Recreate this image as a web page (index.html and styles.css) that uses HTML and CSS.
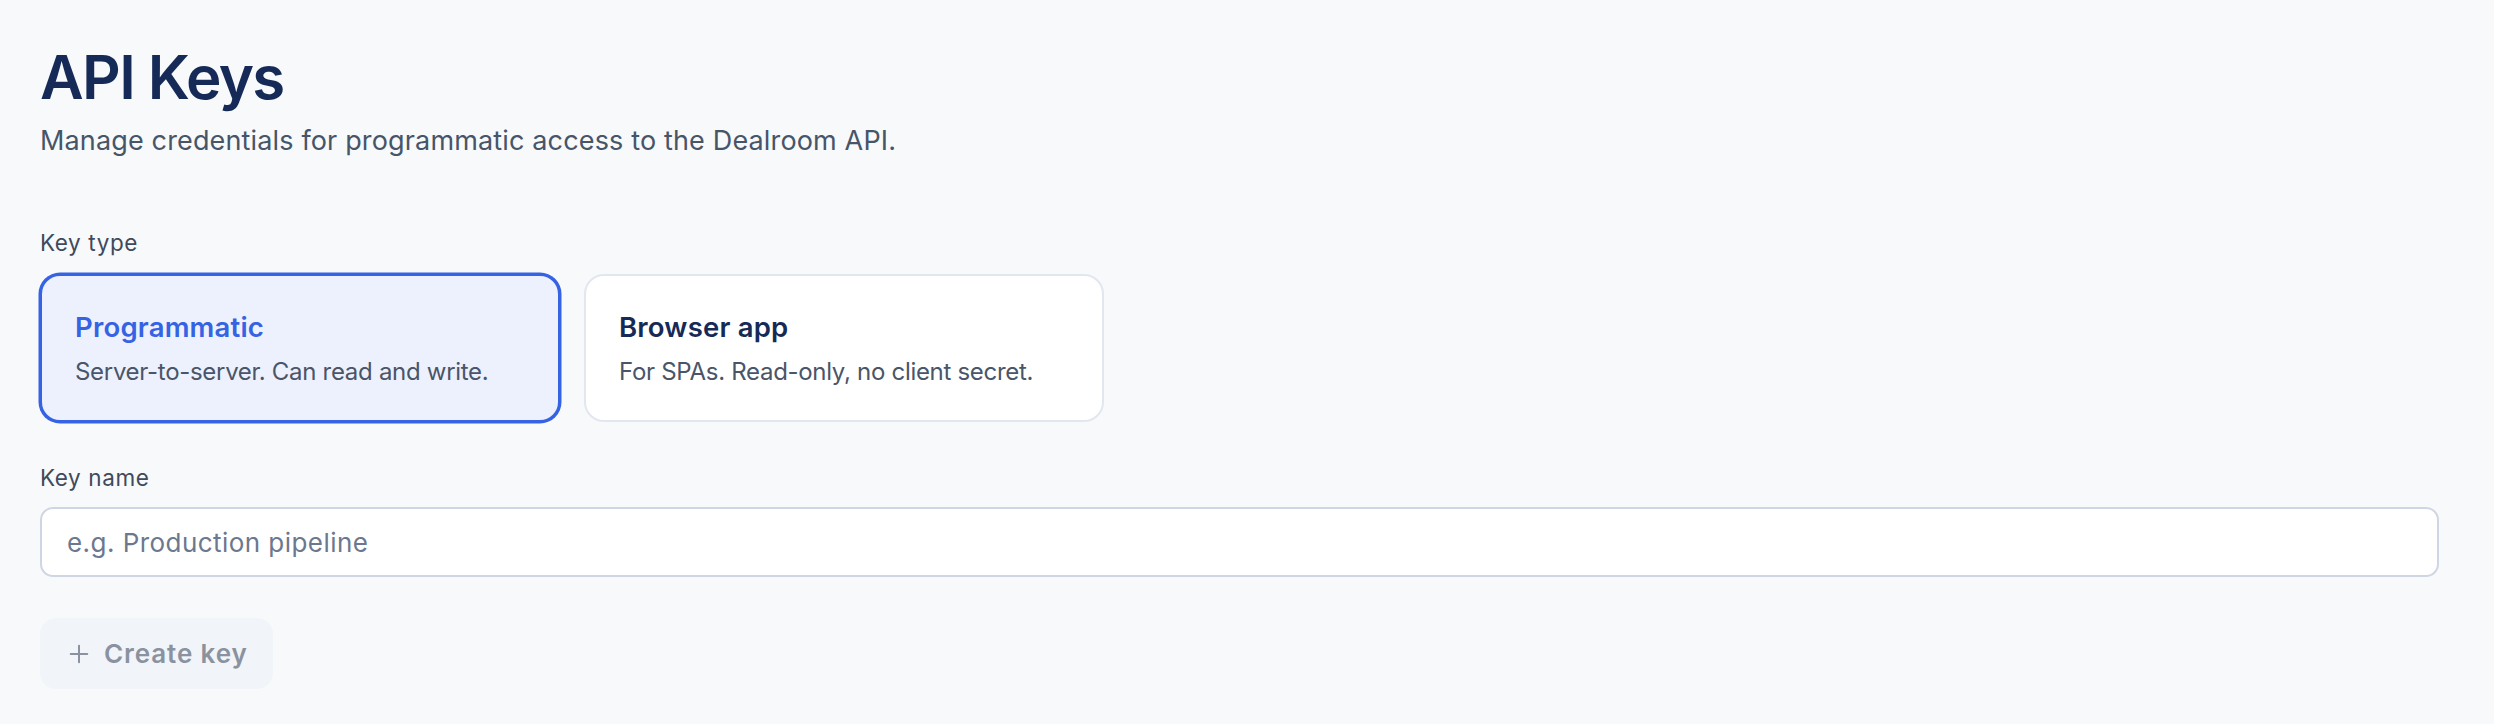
FILE: index.html
```html
<!DOCTYPE html>
<html lang="en">
<head>
<meta charset="utf-8">
<title>API Keys</title>
<link rel="stylesheet" href="styles.css">
</head>
<body>
<main class="page">
  <h1 class="title">API Keys</h1>
  <p class="subtitle">Manage credentials for programmatic access to the Dealroom API.</p>

  <div class="field-label label-type">Key type</div>
  <div class="type-grid">
    <div class="type-card selected">
      <div class="type-name">Programmatic</div>
      <div class="type-desc">Server-to-server. Can read and write.</div>
    </div>
    <div class="type-card">
      <div class="type-name">Browser app</div>
      <div class="type-desc">For SPAs. Read-only, no client secret.</div>
    </div>
  </div>

  <div class="field-label label-name">Key name</div>
  <input class="text-input" type="text" placeholder="e.g. Production pipeline">

  <button class="create-btn" type="button" disabled>
    <svg class="plus" viewBox="0 0 24 24" width="22" height="22" aria-hidden="true">
      <path d="M12 3v18M3 12h18" stroke="currentColor" stroke-width="2.2" stroke-linecap="round" fill="none"/>
    </svg>
    <span>Create key</span>
  </button>
</main>
</body>
</html>
```

FILE: styles.css
```css
html, body {
  margin: 0;
  padding: 0;
  background: #f8f9fb;
}

body {
  font-family: Inter, "Noto Sans", "Liberation Sans", sans-serif;
  color: #172b54;
}

.page {
  padding: 41px 55px 0 40px;
  display: flex;
  flex-direction: column;
  align-items: flex-start;
}

.title {
  margin: 0;
  font-size: 60px;
  line-height: 72px;
  font-weight: 600;
  letter-spacing: -1.6px;
  color: #152a57;
}

.subtitle {
  margin: 8px 0 0;
  font-size: 27px;
  line-height: 40px;
  font-weight: 400;
  color: #475569;
  letter-spacing: 0.15px;
}

.field-label {
  font-size: 22.5px;
  line-height: 32px;
  font-weight: 400;
  color: #3f4a5c;
  letter-spacing: 0.6px;
}

.label-type {
  margin-top: 66px;
}

.type-grid {
  margin-top: 15px;
  display: grid;
  grid-template-columns: 520px 520px;
  gap: 24px;
}

.type-card {
  background: #ffffff;
  border: 2px solid #e2e6ef;
  border-radius: 20px;
  padding: 33px 33px 31px;
  display: flex;
  flex-direction: column;
  gap: 10px;
}

.type-card.selected {
  background: #edf1fe;
  border-color: #3563e3;
  box-shadow: 0 0 0 1.5px #3563e3;
}

.type-name {
  font-size: 27.5px;
  line-height: 36px;
  font-weight: 600;
  color: #152a57;
  letter-spacing: 0.2px;
}

.selected .type-name {
  color: #3563e3;
}

.type-desc {
  font-size: 24px;
  line-height: 34px;
  color: #4a5568;
  letter-spacing: -0.3px;
}

.label-name {
  margin-top: 40px;
}

.text-input {
  margin-top: 13px;
  box-sizing: border-box;
  width: 100%;
  height: 70px;
  border: 2px solid #cfd6e3;
  border-radius: 13px;
  background: #ffffff;
  padding: 0 25px;
  font-family: Inter, "Noto Sans", "Liberation Sans", sans-serif;
  font-size: 26px;
  letter-spacing: 0.45px;
  color: #152a57;
  outline: none;
}

.text-input::placeholder {
  color: #6b788e;
  opacity: 1;
}

.create-btn {
  margin-top: 41px;
  height: 71px;
  box-sizing: border-box;
  display: flex;
  align-items: center;
  gap: 14px;
  padding: 0 25px 0 28px;
  border: none;
  border-radius: 16px;
  background: #f1f4f8;
  color: #8a92a0;
  font-family: Inter, "Noto Sans", "Liberation Sans", sans-serif;
  font-size: 26px;
  font-weight: 600;
  letter-spacing: 0.9px;
  cursor: default;
}

.plus {
  display: block;
  flex: none;
}
```
